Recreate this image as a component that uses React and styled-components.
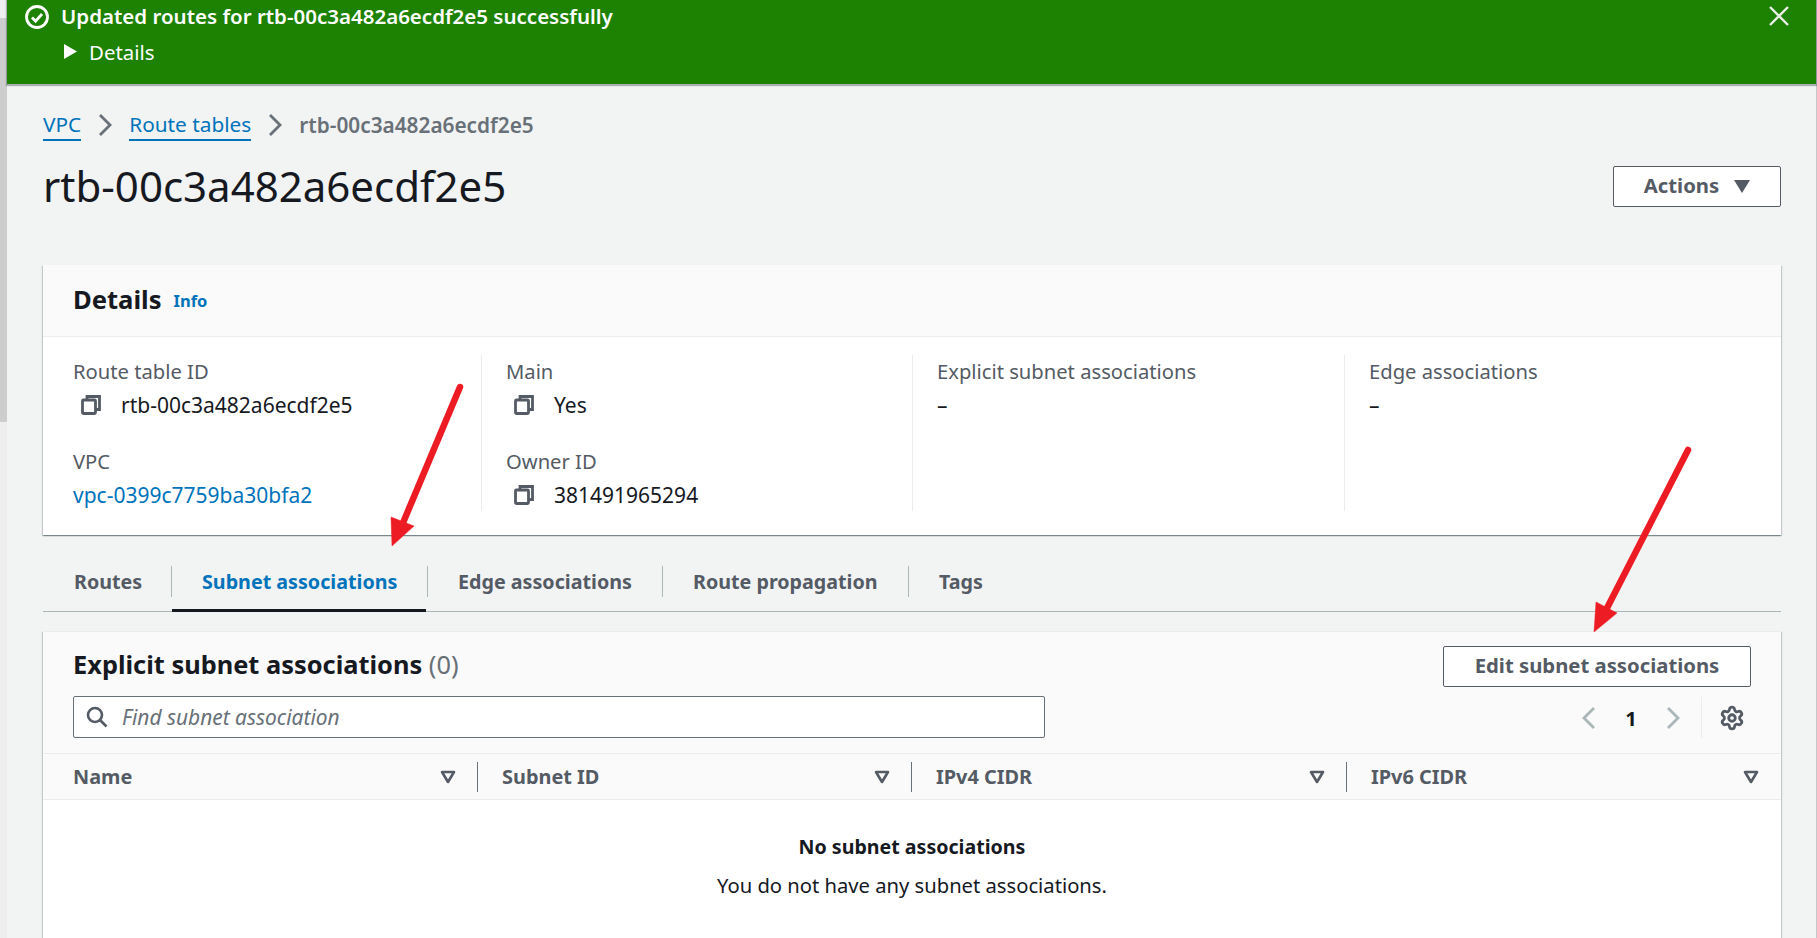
import React from "react";
import styled, { createGlobalStyle } from "styled-components";
import { Settings } from "lucide-react";

const Global = createGlobalStyle`
  html, body { margin: 0; padding: 0; height: 938px; overflow: hidden; background: #f2f3f3; }
  body { font-family: "Noto Sans", "Open Sans", sans-serif; font-size: 20.2px; color: #16191f; }
  * { box-sizing: border-box; }
`;

const Page = styled.div`
  position: relative; display: flex; width: 1817px; height: 938px; overflow: hidden; background: #f2f3f3;
`;
const ScrollStrip = styled.div`
  width: 7px; flex: none; display: flex; flex-direction: column; background: #eeeeee;
`;
const ScrollThumb = styled.div`
  height: 404px; background: #cdcdcd; margin-top: 18px;
`;
const Main = styled.div`
  flex: 1; min-width: 0; display: flex; flex-direction: column; border-right: 1px solid #c4c8c8;
`;
const Banner = styled.div`
  height: 84px; flex: none; background: #1d8102; color: #fff; position: relative;
  box-shadow: 0 1px 1px 1px rgba(84, 91, 100, .45); padding: 0 0 0 18px; z-index: 1;
`;
const BannerRow = styled.div`
  display: flex; align-items: center; height: 31px; gap: 12px; font-weight: 600; font-size: 20.5px;
`;
const DetailsRow = styled.div`
  display: flex; align-items: center; height: 41px; margin-left: 39px; gap: 12px; font-size: 20.4px;
`;
const CloseBtn = styled.div`
  position: absolute; right: 27px; top: 6px; width: 20px; height: 20px; display: flex;
`;
const Content = styled.div`
  flex: 1; min-height: 0; padding: 26px 35px 0 36px; display: flex; flex-direction: column;
`;
const Crumbs = styled.nav`
  display: flex; align-items: center; height: 30px; font-size: 20.8px;
`;
const CrumbLink = styled.a`
  color: #0073bb; border-bottom: 2px solid #0073bb; line-height: 25px; height: 29px; margin-top: 2px;
`;
const CrumbSep = styled.span`
  display: flex; width: 48px; justify-content: center; color: #687078;
`;
const CrumbCurrent = styled.span`
  color: #687078; font-weight: 600; font-size: 20.8px; margin-top: -1px;
`;
const TitleRow = styled.div`
  display: flex; justify-content: space-between; align-items: flex-start; height: 125px; padding-top: 26px;
`;
const Title = styled.h1`
  margin: -2px 0 0; font-size: 42px; font-weight: 400; line-height: 44px; color: #16191f;
`;
const Button = styled.div`
  display: flex; align-items: center; justify-content: center; gap: 15px; flex: none;
  width: ${p => p.$w}px; height: ${p => p.$h}px; background: #fff; border: 1px solid #545b64; border-radius: 2px;
  color: #545b64; font-weight: 700; font-size: 20.3px; padding-bottom: 4px;
`;
const Card = styled.section`
  background: #fff; box-shadow: 0 1px 1px 0 rgba(0,28,36,.3), 1px 1px 1px 0 rgba(0,28,36,.15), -1px 1px 1px 0 rgba(0,28,36,.15);
`;
const DetailsCard = styled(Card)`
  height: 270px; flex: none;
`;
const CardHead = styled.div`
  height: 72px; background: #fafafa; border-bottom: 1px solid #eaeded; padding: 0 30px 3px; display: flex; align-items: center; gap: 12px;
`;
const H2 = styled.h2`
  margin: 0; font-size: 25.6px; font-weight: 700; color: #16191f;
`;
const InfoLink = styled.a`
  color: #0073bb; font-size: 16.5px; font-weight: 700; margin-top: 3px;
`;
const Cols = styled.div`
  display: grid; grid-template-columns: 408px 431px 432px 1fr; padding: 18px 0 0 30px;
`;
const Col = styled.div`
  height: 156px; padding-left: ${p => (p.$first ? 0 : 24)}px; border-left: ${p => (p.$first ? "none" : "1px solid #eaeded")};
  display: flex; flex-direction: column;
`;
const Label = styled.div`
  color: #545b64; height: 33px; flex: none; line-height: 32px; font-size: 20.2px;
`;
const Value = styled.div`
  display: flex; align-items: center; height: 33px; flex: none; font-size: 21px; color: ${p => (p.$link ? "#0073bb" : "#16191f")};
  gap: 20px; padding-left: ${p => (p.$icon ? 8 : 0)}px;
  margin-bottom: ${p => (p.$last ? 0 : 24)}px;
`;
const Tabs = styled.div`
  margin-top: 31px; height: 46px; display: flex; align-items: flex-start; border-bottom: 1px solid #aab7b8; flex: none;
`;
const Tab = styled.div`
  width: ${p => p.$w}px; height: 46px; padding-left: 31px; position: relative; flex: none;
  font-weight: 700; font-size: 19.7px; color: ${p => (p.$active ? "#0073bb" : "#545b64")};
  line-height: 32px;
  &::before { content: ""; display: ${p => (p.$first ? "none" : "block")}; position: absolute; left: 0; top: 0; height: 31px; width: 1px; background: #aab7b8; }
  &::after { content: ""; display: ${p => (p.$active ? "block" : "none")}; position: absolute; left: 1px; right: 1px; bottom: 0; height: 3px; background: #16191f; }
`;
const TableCard = styled(Card)`
  margin-top: 19px; flex: 1; min-height: 0;
`;
const TableHead = styled.div`
  background: #fafafa; height: 122px; padding: 14px 30px 0; display: grid; grid-template-columns: 1fr auto; border-top: 1px solid #eaeded;
`;
const TableTitleBlock = styled.div`
  display: flex; flex-direction: column;
`;
const TableTitle = styled.div`
  font-size: 25.4px; font-weight: 700; line-height: 36px; height: 50px; color: #16191f;
`;
const Count = styled.span`
  font-weight: 400; color: #687078;
`;
const Search = styled.div`
  width: 972px; height: 42px; border: 1px solid #687078; border-radius: 2px; background: #fff; display: flex; align-items: center; padding-left: 12px; gap: 14px;
  font-style: italic; color: #687078; font-size: 20.9px;
`;
const Tools = styled.div`
  display: flex; flex-direction: column; align-items: flex-end;
`;
const Pager = styled.div`
  display: flex; align-items: center; height: 41px; margin-top: 10px; width: 308px;
  font-weight: 700; color: #16191f; font-size: 20.2px; padding-left: 139px;
`;
const PageNum = styled.span`
  width: 70px; text-align: center;
`;
const PagerSep = styled.span`
  width: 1px; height: 41px; background: #eaeded; margin-left: 21px; margin-right: 17px;
`;
const HeadRow = styled.div`
  display: grid; grid-template-columns: 435px 434px 435px 434px; height: 47px; background: #fafafa; border-top: 1px solid #eaeded; border-bottom: 1px solid #eaeded;
`;
const HeadCell = styled.div`
  display: flex; align-items: center; justify-content: space-between; padding: 0 22px 0 ${p => (p.$first ? 30 : 24)}px; position: relative;
  font-weight: 700; color: #545b64; font-size: 19.9px;
  &::after { content: ""; display: ${p => (p.$last ? "none" : "block")}; position: absolute; right: 0; top: 8px; height: 30px; width: 1px; background: #687078; }
`;
const Empty = styled.div`
  text-align: center; padding-top: 29px;
`;
const EmptyTitle = styled.div`
  font-weight: 700; font-size: 19.6px; height: 38px; line-height: 36px; color: #16191f;
`;
const EmptyText = styled.div`
  font-size: 20.2px; line-height: 36px; color: #16191f;
`;
const Overlay = styled.svg`
  position: absolute; left: 0; top: 0; pointer-events: none; z-index: 5;
`;

const Copy = () => (
  <svg width="20" height="20" viewBox="0 0 20 20" fill="none" stroke="#545b64" strokeWidth="2.8" style={{ flex: "none" }}>
    <path d="M6 5V1.5h12.5v13H15" />
    <rect x="1.5" y="5" width="13" height="13.5" rx="1" />
  </svg>
);
const Chevron = ({ dir = "right", color = "#687078" }) => (
  <svg width="14" height="24" viewBox="0 0 14 24" fill="none" stroke={color} strokeWidth="2.8" style={{ flex: "none" }}>
    <path d={dir === "right" ? "M2 2l10 10-10 10" : "M12 2L2 12l10 10"} />
  </svg>
);
const Filter = () => (
  <svg width="16" height="14" viewBox="0 0 16 14" fill="none" stroke="#545b64" strokeWidth="2.6" strokeLinejoin="round">
    <path d="M2 2h12L8 12z" />
  </svg>
);

export default function App() {
  return (
    <Page>
      <Global />
      <ScrollStrip><ScrollThumb /></ScrollStrip>
      <Main>
        <Banner>
          <BannerRow>
            <svg width="24" height="24" viewBox="0 0 24 24" fill="none" stroke="#fff" strokeWidth="2.8" style={{ marginTop: 3, flex: "none" }}>
              <circle cx="12" cy="12" r="10.5" />
              <path d="M7 12.5l3.6 3.6L17 9" />
            </svg>
            <span>Updated routes for rtb-00c3a482a6ecdf2e5 successfully</span>
          </BannerRow>
          <DetailsRow>
            <svg width="13" height="15" viewBox="0 0 13 15"><path d="M0 0l13 7.5L0 15z" fill="#fff" /></svg>
            <span>Details</span>
          </DetailsRow>
          <CloseBtn>
            <svg width="20" height="20" viewBox="0 0 20 20" fill="none" stroke="#e8eee4" strokeWidth="2.4"><path d="M1 1l18 18M19 1L1 19" /></svg>
          </CloseBtn>
        </Banner>
        <Content>
          <Crumbs>
            <CrumbLink>VPC</CrumbLink>
            <CrumbSep><Chevron /></CrumbSep>
            <CrumbLink>Route tables</CrumbLink>
            <CrumbSep><Chevron /></CrumbSep>
            <CrumbCurrent>rtb-00c3a482a6ecdf2e5</CrumbCurrent>
          </Crumbs>
          <TitleRow>
            <Title>rtb-00c3a482a6ecdf2e5</Title>
            <Button $w={168} $h={41}>
              <span>Actions</span>
              <svg width="16" height="13" viewBox="0 0 16 13" style={{ marginTop: 4 }}><path d="M0 0h16L8 13z" fill="#545b64" /></svg>
            </Button>
          </TitleRow>
          <DetailsCard>
            <CardHead>
              <H2>Details</H2>
              <InfoLink>Info</InfoLink>
            </CardHead>
            <Cols>
              <Col $first>
                <Label>Route table ID</Label>
                <Value $icon><Copy />rtb-00c3a482a6ecdf2e5</Value>
                <Label>VPC</Label>
                <Value $link $last>vpc-0399c7759ba30bfa2</Value>
              </Col>
              <Col>
                <Label>Main</Label>
                <Value $icon><Copy />Yes</Value>
                <Label>Owner ID</Label>
                <Value $icon $last><Copy />381491965294</Value>
              </Col>
              <Col>
                <Label>Explicit subnet associations</Label>
                <Value>–</Value>
              </Col>
              <Col>
                <Label>Edge associations</Label>
                <Value>–</Value>
              </Col>
            </Cols>
          </DetailsCard>
          <Tabs>
            <Tab $first $w={128}>Routes</Tab>
            <Tab $w={256} $active>Subnet associations</Tab>
            <Tab $w={235}>Edge associations</Tab>
            <Tab $w={246}>Route propagation</Tab>
            <Tab $w={120}>Tags</Tab>
          </Tabs>
          <TableCard>
            <TableHead>
              <TableTitleBlock>
                <TableTitle>Explicit subnet associations <Count>(0)</Count></TableTitle>
                <Search>
                  <svg width="22" height="22" viewBox="0 0 22 22" fill="none" stroke="#545b64" strokeWidth="2.6">
                    <circle cx="9" cy="9" r="7" /><path d="M14 14l6.5 6.5" />
                  </svg>
                  <span>Find subnet association</span>
                </Search>
              </TableTitleBlock>
              <Tools>
                <Button $w={308} $h={41}>Edit subnet associations</Button>
                <Pager>
                  <Chevron dir="left" color="#aab7b8" />
                  <PageNum>1</PageNum>
                  <Chevron color="#aab7b8" />
                  <PagerSep />
                  <Settings size={26} color="#545b64" strokeWidth={2.6} />
                </Pager>
              </Tools>
            </TableHead>
            <HeadRow>
              <HeadCell $first><span>Name</span><Filter /></HeadCell>
              <HeadCell><span>Subnet ID</span><Filter /></HeadCell>
              <HeadCell><span>IPv4 CIDR</span><Filter /></HeadCell>
              <HeadCell $last><span>IPv6 CIDR</span><Filter /></HeadCell>
            </HeadRow>
            <Empty>
              <EmptyTitle>No subnet associations</EmptyTitle>
              <EmptyText>You do not have any subnet associations.</EmptyText>
            </Empty>
          </TableCard>
        </Content>
      </Main>
      <Overlay width="1817" height="938" viewBox="0 0 1817 938">
        <g fill="#ed1c24" stroke="#ed1c24">
          <path d="M460 387L400 530" strokeWidth="6.5" strokeLinecap="round" fill="none" />
          <path d="M392 546L391 517L414 526z" strokeWidth="0.5" />
          <path d="M1688 450L1605 612" strokeWidth="6.5" strokeLinecap="round" fill="none" />
          <path d="M1594 632L1596 602L1617 613z" strokeWidth="0.5" />
        </g>
      </Overlay>
    </Page>
  );
}
